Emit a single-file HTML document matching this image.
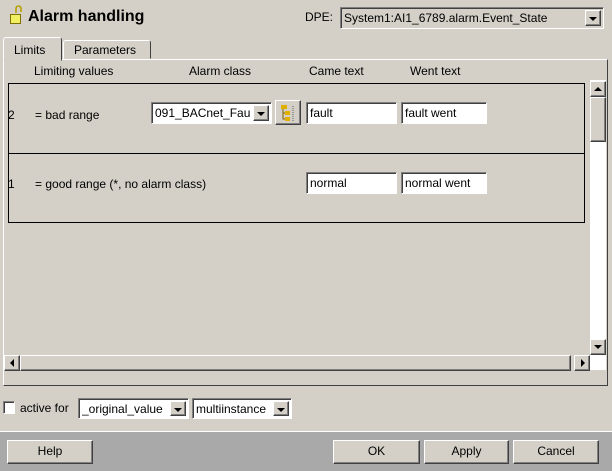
<!DOCTYPE html>
<html><head><style>
*{box-sizing:border-box;margin:0;padding:0}
body{width:612px;height:471px;background:#d4d0c8;font-family:"Liberation Sans",sans-serif;font-size:12px;color:#000;position:relative;overflow:hidden}
.a{position:absolute}
.raised{background:#d4d0c8;border:1px solid;border-color:#fff #404040 #404040 #fff;box-shadow:inset -1px -1px 0 #808080}
.sunk{background:#fff;border:1px solid;border-color:#808080 #fff #fff #808080;box-shadow:inset 1px 1px 0 #404040}
.t{white-space:nowrap;line-height:14px}
.combo .v{position:absolute;left:3px;top:3px;white-space:nowrap;overflow:hidden}
.arr{position:absolute;top:2px;right:2px;width:16px;bottom:2px}
.tri{width:0;height:0;border-left:4px solid transparent;border-right:4px solid transparent;border-top:4px solid #000;position:absolute;left:3px;top:6px}
.btn{text-align:center;line-height:21px}
</style></head><body>
<!-- icon -->
<svg class="a" style="left:8px;top:4px" width="16" height="22" viewBox="0 0 16 22">
<path d="M8 9 V5 Q8 2 10.5 2 Q13 2 13 5 V8" fill="none" stroke="#b8a000" stroke-width="1.6"/>
<rect x="2.5" y="10.5" width="10" height="9" fill="#f0f060" stroke="#807000"/>
</svg>
<div class="a t" style="left:28px;top:8px;font-size:16px;font-weight:bold;line-height:18px">Alarm handling</div>
<div class="a t" style="left:305px;top:10px">DPE:</div>
<div class="a sunk combo" style="left:340px;top:7px;width:264px;height:22px;background:#d4d0c8"><span class="v">System1:AI1_6789.alarm.Event_State</span><div class="arr raised"><div class="tri"></div></div></div>

<!-- tabs -->
<div class="a" style="left:3px;top:59px;width:605px;height:327px;border:1px solid;border-color:#fff #404040 #404040 #fff"></div>
<div class="a t" style="left:3px;top:37px;width:59px;height:24px;background:#d4d0c8;border:1px solid;border-color:#fff #404040 transparent #fff;border-radius:3px 3px 0 0;padding:5px 0 0 10px">Limits</div>
<div class="a t" style="left:63px;top:40px;width:88px;height:19px;border:1px solid;border-color:#fff #404040 transparent #fff;border-radius:3px 3px 0 0;padding:2px 0 0 10px">Parameters</div>

<div class="a t" style="left:34px;top:64px">Limiting values</div>
<div class="a t" style="left:189px;top:64px">Alarm class</div>
<div class="a t" style="left:309px;top:64px">Came text</div>
<div class="a t" style="left:410px;top:64px">Went text</div>

<div class="a" style="left:8px;top:83px;width:577px;height:71px;border:1px solid #000;border-bottom:none"></div>
<div class="a" style="left:8px;top:153px;width:577px;height:70px;border:1px solid #000"></div>

<div class="a t" style="left:8px;top:108px">2</div>
<div class="a t" style="left:35px;top:108px">= bad range</div>
<div class="a sunk combo" style="left:151px;top:102px;width:121px;height:22px"><span class="v" style="right:20px">091_BACnet_Fault</span><div class="arr raised"><div class="tri"></div></div></div>
<div class="a raised" style="left:275px;top:100px;width:26px;height:25px">
<svg width="24" height="23"><rect x="5" y="4" width="6" height="4" fill="#e0b000"/><rect x="9" y="10" width="5" height="4" fill="#e0b000"/><rect x="9" y="16" width="5" height="4" fill="#e0b000"/><path d="M7 8v10h2M7 12h2" stroke="#806000" fill="none"/><path d="M17 5v15" stroke="#606060" stroke-dasharray="1 1"/></svg></div>
<div class="a sunk t" style="left:306px;top:102px;width:91px;height:22px;padding:3px 0 0 3px">fault</div>
<div class="a sunk t" style="left:401px;top:102px;width:86px;height:22px;padding:3px 0 0 3px">fault went</div>

<div class="a t" style="left:8px;top:177px">1</div>
<div class="a t" style="left:35px;top:177px">= good range (*, no alarm class)</div>
<div class="a sunk t" style="left:306px;top:172px;width:91px;height:22px;padding:3px 0 0 3px">normal</div>
<div class="a sunk t" style="left:401px;top:172px;width:86px;height:22px;padding:3px 0 0 3px">normal went</div>

<!-- scrollbars -->
<div class="a" style="left:590px;top:80px;width:16px;height:290px;background:#fff"></div>
<div class="a raised" style="left:590px;top:81px;width:16px;height:16px"><div style="position:absolute;left:3px;top:5px;border-left:4px solid transparent;border-right:4px solid transparent;border-bottom:4px solid #000"></div></div>
<div class="a raised" style="left:590px;top:97px;width:16px;height:45px"></div>
<div class="a raised" style="left:590px;top:339px;width:16px;height:16px"><div class="tri" style="left:3px;top:5px"></div></div>
<div class="a" style="left:4px;top:355px;width:586px;height:16px;background:#d4d0c8"></div>
<div class="a raised" style="left:4px;top:355px;width:16px;height:16px"><div style="position:absolute;left:5px;top:3px;border-top:4px solid transparent;border-bottom:4px solid transparent;border-right:4px solid #000"></div></div>
<div class="a raised" style="left:20px;top:355px;width:551px;height:16px"></div>
<div class="a raised" style="left:574px;top:355px;width:16px;height:16px"><div style="position:absolute;left:6px;top:3px;border-top:4px solid transparent;border-bottom:4px solid transparent;border-left:4px solid #000"></div></div>

<!-- active for -->
<div class="a sunk" style="left:3px;top:401px;width:12px;height:13px"></div>
<div class="a t" style="left:20px;top:401px">active for</div>
<div class="a sunk combo" style="left:78px;top:398px;width:111px;height:21px"><span class="v">_original_value</span><div class="arr raised"><div class="tri"></div></div></div>
<div class="a sunk combo" style="left:192px;top:398px;width:100px;height:21px"><span class="v">multiinstance</span><div class="arr raised"><div class="tri"></div></div></div>

<!-- bottom -->
<div class="a" style="left:0;top:431px;width:612px;height:40px;background:#a9a9a9;border-top:1px solid #fff"></div>
<div class="a raised btn" style="left:7px;top:440px;width:86px;height:24px">Help</div>
<div class="a raised btn" style="left:333px;top:440px;width:87px;height:24px">OK</div>
<div class="a raised btn" style="left:424px;top:440px;width:85px;height:24px">Apply</div>
<div class="a raised btn" style="left:513px;top:440px;width:86px;height:24px">Cancel</div>
</body></html>
